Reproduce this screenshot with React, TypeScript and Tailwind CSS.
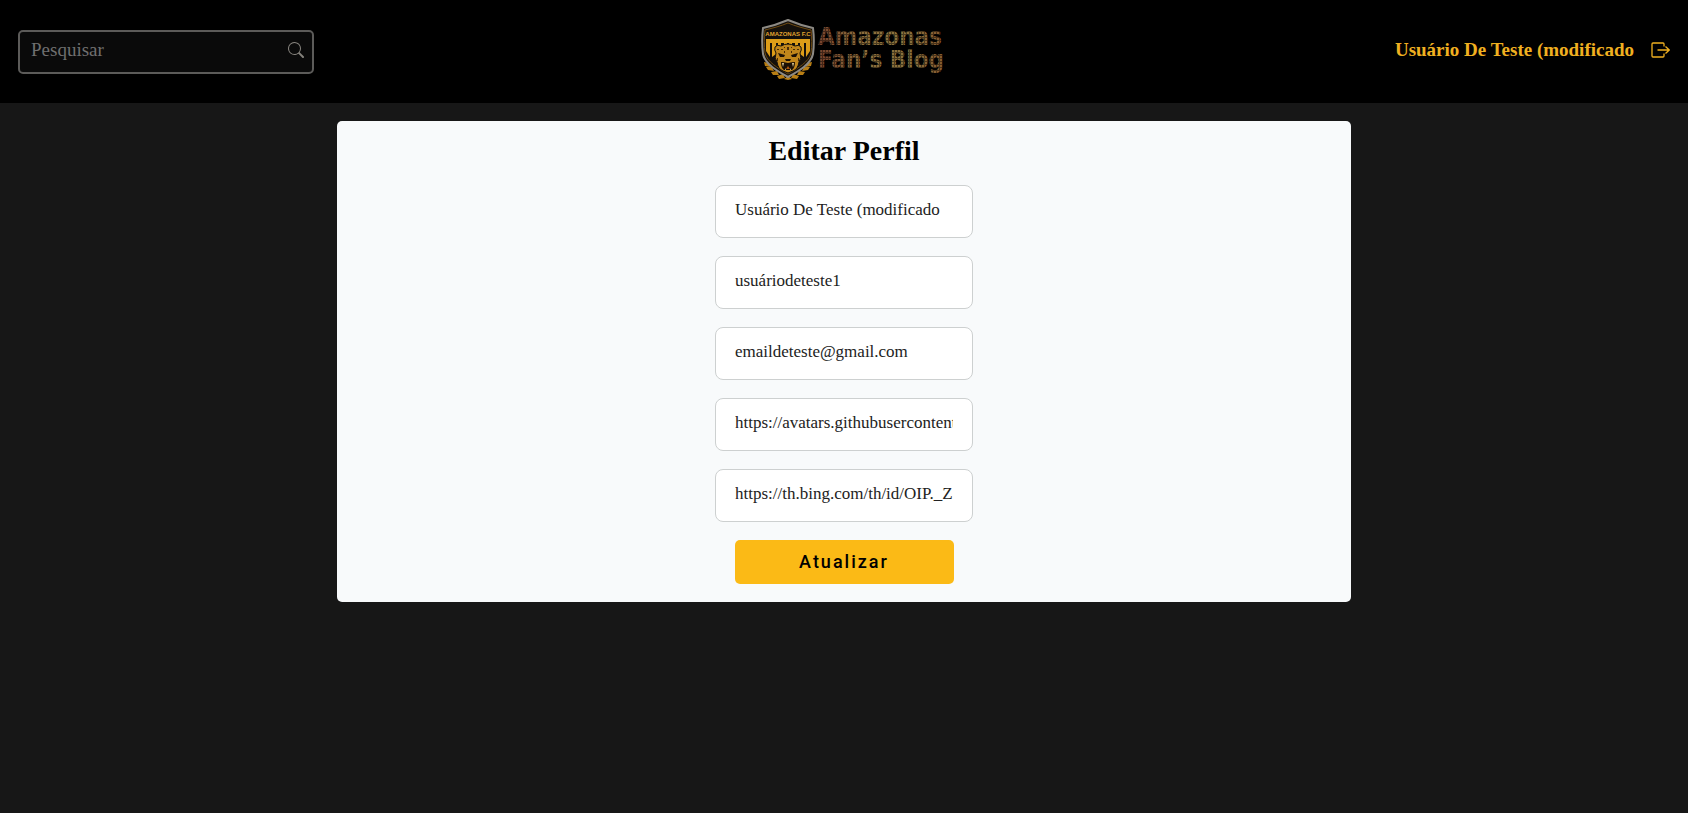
import { useState } from "react";
import { BsSearch } from "react-icons/bs";

function Shield() {
  return (
    <svg viewBox="0 3 56 66" className="h-[66px] w-14 shrink-0" aria-hidden="true">
      <g fill="#b87e14">
        <path d="M4 46l5 1 1 4-5-1zM6 51l6 0 2 4-6-1zM11 56l6-1 2 4-6 0zM17 60l6-2 2 4-6 1zM24 63l4-3 0 4z" />
        <path d="M52 46l-5 1-1 4 5-1zM50 51l-6 0-2 4 6-1zM45 56l-6-1-2 4 6 0zM39 60l-6-2-2 4 6 1zM32 63l-4-3 0 4z" />
      </g>
      <path
        d="M28 4C21 7 12 10 3 12C2 20 2 30 3 38C5 48 17 55 28 61C39 55 51 48 53 38C54 30 54 20 53 12C44 10 35 7 28 4Z"
        fill="#14100b"
        stroke="#8d8a84"
        strokeWidth="2"
      />
      <path
        d="M28 7C21 10 13 12 5 14C4 21 4 30 5 37C7 46 18 52 28 58C38 52 49 46 51 37C52 30 52 21 51 14C43 12 35 10 28 7Z"
        fill="none"
        stroke="#6f4b12"
      />
      <text
        x="28"
        y="20"
        textAnchor="middle"
        fontFamily="Liberation Sans, sans-serif"
        fontSize="6"
        fontWeight="700"
        fill="#e0a32f"
      >
        AMAZONAS F.C
      </text>
      <path
        d="M6 23h44v4H6zM6 26h4v15l-4-6zM12 26h4v12l-4 3zM18 26h3v4h-3zM24 26h3v3h-3zM46 26h4v9l-4 6zM40 26h4v15l-4-3zM35 26h3v4h-3zM29 26h3v3h-3z"
        fill="#dd9d18"
      />
      <path
        d="M15 31Q17 28 21 30Q28 26 35 30Q39 28 41 31Q42 34 40 37Q42 42 39 46Q38 53 33 55L28 57L23 55Q18 53 17 46Q14 42 16 37Q14 34 15 31Z"
        fill="#c1861b"
        stroke="#14100b"
      />
      <path d="M18 37l7 2-1 2-4 0zM38 37l-7 2 1 2 4 0zM25 43h6l-1 2h-4zM21 46Q24 46 28 47Q32 46 35 46Q35 52 32 54H24Q21 52 21 46Z" fill="#1b1006" />
      <path d="M22 47l1 4 1-4zM34 47l-1 4-1-4zM25 54l0-2 1 2zM31 54l0-2-1 2z" fill="#e5cf98" />
      <path d="M26 53l2-3 2 3z" fill="#a9560f" />
      <path
        d="M21 33h2v1h-2zM27 31h2v3h-2zM33 33h2v1h-2zM24 35h1v2h-1zM31 35h1v2h-1zM17 42h1v3h-1zM38 42h1v3h-1zM17 33h2v1h-2zM37 33h2v1h-2zM24 31h1v1h-1zM31 31h1v1h-1z"
        fill="#4a2d08"
      />
    </svg>
  );
}

function Wordmark() {
  return (
    <svg viewBox="0 0 132 66" className="h-[66px] w-33 shrink-0">
      <defs>
        <linearGradient id="ink" gradientUnits="userSpaceOnUse" x1="0" y1="36" x2="130" y2="26">
          <stop offset="0" stopColor="#743d2a" />
          <stop offset="0.35" stopColor="#8a6c3a" />
          <stop offset="0.7" stopColor="#88713c" />
          <stop offset="1" stopColor="#84552b" />
        </linearGradient>
        <pattern id="grid" width="3" height="3" patternUnits="userSpaceOnUse">
          <path d="M0 0h3v1H1v2H0z" fill="#000" fillOpacity="0.45" />
        </pattern>
      </defs>
      <text fontFamily="DejaVu Sans Condensed, DejaVu Sans, sans-serif" fontSize="24" fontWeight="700" fill="url(#ink)">
        <tspan x="2" y="26">Amazonas</tspan>
        <tspan x="2" y="49">Fan’s Blog</tspan>
      </text>
      <rect width="132" height="66" fill="url(#grid)" />
    </svg>
  );
}

function ExitIcon() {
  return (
    <svg viewBox="0 0 20 16" className="h-4 w-5" fill="none" stroke="currentColor" strokeWidth="1.3" aria-hidden="true">
      <path d="M14 4.500V2Q14 1 13 1H3Q2 1 2 2V14Q2 15 3 15H13Q14 15 14 14V11.500" />
      <path d="M7.500 8H19M15.500 4.500L19.200 8L15.500 11.500" />
    </svg>
  );
}

const initialProfile = [
  { name: "name", label: "Nome", type: "text", value: "Usuário De Teste (modificado" },
  { name: "username", label: "Nome de usuário", type: "text", value: "usuáriodeteste1" },
  { name: "email", label: "E-mail", type: "email", value: "emaildeteste@gmail.com" },
  { name: "avatar", label: "Avatar", type: "text", value: "https://avatars.githubusercontent.com/u/1" },
  { name: "background", label: "Imagem de fundo", type: "text", value: "https://th.bing.com/th/id/OIP._Z" },
];

export default function App() {
  const [profile, setProfile] = useState(initialProfile);

  return (
    <div className="min-h-screen bg-[#171717] font-['Liberation_Serif',serif]">
      <header className="grid grid-cols-[1fr_auto_1fr] items-center bg-black px-[18px] pt-[19px] pb-[18px]">
        <form role="search" className="relative w-[296px]" onSubmit={(e) => e.preventDefault()}>
          <input
            type="search"
            aria-label="Pesquisar"
            placeholder="Pesquisar"
            className="h-11 w-full rounded-[5px] border-2 border-[#5c5b59] bg-[#0a0a0a] pr-10 pb-1 pl-[11px] text-[19px] text-gray-200 outline-none placeholder:text-[#6f6f6f]"
          />
          <button type="submit" aria-label="Buscar" className="absolute top-0 right-[10px] bottom-1 text-[#85827c]">
            <BsSearch className="size-4" />
          </button>
        </form>
        <a href="#" aria-label="Amazonas Fan’s Blog" className="flex items-center pl-5">
          <Shield />
          <Wordmark />
        </a>
        <div className="flex items-center justify-end gap-4 pb-1 text-[#f0b020]">
          <a href="#" className="text-[19px] font-bold">
            Usuário De Teste (modificado
          </a>
          <button type="button" aria-label="Sair">
            <ExitIcon />
          </button>
        </div>
      </header>
      <main className="px-4 pt-[18px]">
        <section className="mx-auto w-full max-w-[1014px] rounded-[5px] bg-[#f8fafb] px-4 pt-3 pb-[18px]">
          <h1 className="text-center text-[28px] leading-9 font-bold text-black">Editar Perfil</h1>
          <form className="mt-4 flex flex-col items-center gap-[18px]" onSubmit={(e) => e.preventDefault()}>
            {profile.map((field, i) => (
              <input
                key={field.name}
                name={field.name}
                type={field.type}
                aria-label={field.label}
                value={field.value}
                onChange={(e) =>
                  setProfile(profile.map((f, j) => (j === i ? { ...f, value: e.target.value } : f)))
                }
                className="h-[53px] w-[258px] rounded-lg border border-[#cdd0d0] bg-white px-[19px] pb-1 text-[17px] text-[#222] outline-none"
              />
            ))}
            <button
              type="submit"
              className="h-11 w-[219px] rounded-[5px] bg-[#fbba16] font-[Roboto,sans-serif] text-lg font-medium tracking-[2px] text-black"
            >
              Atualizar
            </button>
          </form>
        </section>
      </main>
    </div>
  );
}
